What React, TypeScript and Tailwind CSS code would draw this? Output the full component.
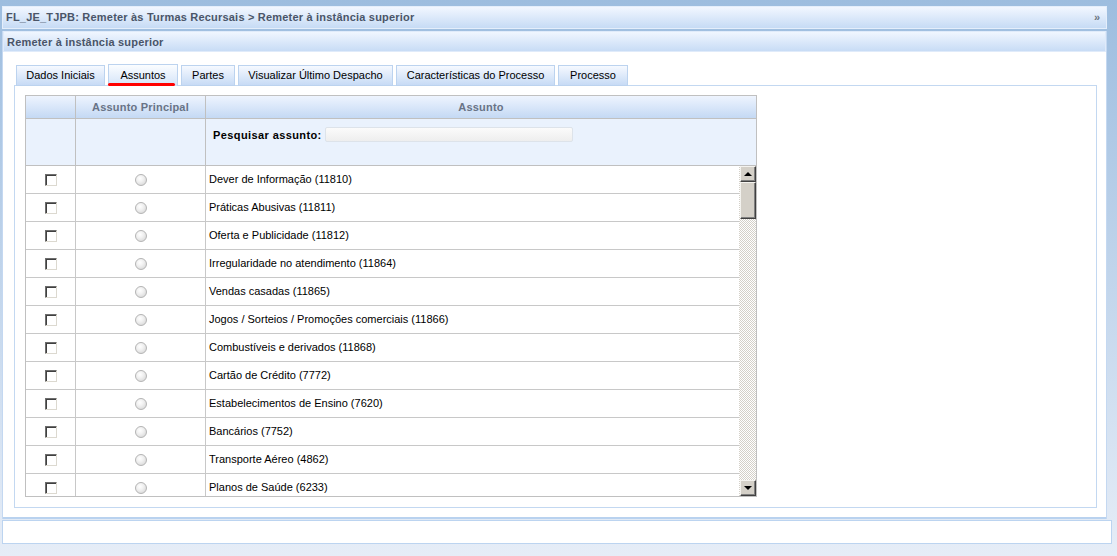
import React from "react";

const rows = [
  "Dever de Informação (11810)",
  "Práticas Abusivas (11811)",
  "Oferta e Publicidade (11812)",
  "Irregularidade no atendimento (11864)",
  "Vendas casadas (11865)",
  "Jogos / Sorteios / Promoções comerciais (11866)",
  "Combustíveis e derivados (11868)",
  "Cartão de Crédito (7772)",
  "Estabelecimentos de Ensino (7620)",
  "Bancários (7752)",
  "Transporte Aéreo (4862)",
  "Planos de Saúde (6233)",
];

const tabs = [
  { label: "Dados Iniciais", w: "w-[89px]" },
  { label: "Assuntos", w: "w-[70px]", active: true },
  { label: "Partes", w: "w-[54px]" },
  { label: "Visualizar Último Despacho", w: "w-[155px]" },
  { label: "Características do Processo", w: "w-[159px]" },
  { label: "Processo", w: "w-[70px]" },
];

function ScrollBtn({ up }: { up?: boolean }) {
  return (
    <div className="h-[16px] w-[16px] bg-[#d4d0c8] border border-t-[#f4f3ef] border-l-[#f4f3ef] border-r-[#404040] border-b-[#404040] flex items-center justify-center shadow-[inset_-1px_-1px_0_#808080]">
      <svg width="8" height="5" viewBox="0 0 8 5">
        {up ? <polygon points="0,4 4,0 8,4" fill="#000" /> : <polygon points="0,0 8,0 4,4" fill="#000" />}
      </svg>
    </div>
  );
}

export default function App() {
  return (
    <div
      className="w-[1117px] h-[556px] overflow-hidden bg-gradient-to-b from-[#9dbddf] to-[#e6edf7] pt-[6px] pl-[2px] text-black"
      style={{ fontFamily: '"Liberation Sans", Arial, sans-serif' }}
    >
      {/* top title bar */}
      <div className="w-[1105px] h-[23px] border border-[#e4eefb] bg-gradient-to-b from-[#f2f7ff] to-[#c6dbf5] flex items-center justify-between pl-[3px] pr-[6px]">
        <span className="text-[11px] font-bold text-[#4a5568] tracking-[0.2px]">
          FL_JE_TJPB: Remeter às Turmas Recursais &gt; Remeter à instância superior
        </span>
        <span className="text-[11px] font-bold text-[#6b7480]">»</span>
      </div>
      {/* second bar */}
      <div className="mt-[2px] w-[1105px] bg-white border-x border-[#c4d8f1]">
        <div className="h-[21px] border border-[#e0ebfa] bg-gradient-to-b from-[#f0f6ff] to-[#c8dcf5] flex items-center pl-[3px]">
          <span className="text-[11px] font-bold text-[#4a5568] tracking-[0.2px] mt-px">Remeter à instância superior</span>
        </div>
        {/* white panel */}
        <div className="h-[467px] border-b-2 border-[#b9d2ef] pt-[12px] pl-[11px]">
          {/* tabs */}
          <div className="relative flex items-end gap-[3px] ml-[2px] h-[22px]">
            {tabs.map((t) => (
              <div
                key={t.label}
                className={
                  t.active
                    ? `${t.w} h-[22px] border border-b-0 border-[#bcd3ef] bg-gradient-to-b from-[#fbfdff] to-[#d3e3f8] flex items-center justify-center text-[11px] relative z-10`
                    : `${t.w} h-[21px] border border-[#bcd3ef] bg-gradient-to-b from-[#f6f9ff] to-[#c7dbf5] flex items-center justify-center text-[11px]`
                }
              >
                {t.label}
              </div>
            ))}
            <div className="absolute left-[92px] top-[19px] w-[67px] h-[3px] rounded-full bg-[#ff0000] z-20" />
          </div>
          {/* tab content */}
          <div className="w-[1083px] h-[423px] border border-[#c3d8f1] -mt-px pt-[9px] pl-[10px]">
            <div className="w-[732px] border border-[#c0c0c0]">
              {/* header */}
              <div className="flex h-[23px] bg-gradient-to-b from-[#eef4fe] to-[#c4d9f4] border-b border-[#c0c0c0] text-[11px] font-bold text-[#687386] tracking-[0.2px]">
                <div className="w-[50px] border-r border-[#c0c0c0]" />
                <div className="w-[130px] border-r border-[#c0c0c0] flex items-center justify-center">Assunto Principal</div>
                <div className="flex-1 flex items-center justify-center">Assunto</div>
              </div>
              {/* filter */}
              <div className="flex h-[47px] bg-[#eaf2fd] border-b border-[#c0c0c0]">
                <div className="w-[50px] border-r border-[#c0c0c0]" />
                <div className="w-[130px] border-r border-[#c0c0c0]" />
                <div className="flex-1 flex items-start pt-[8px] pl-[7px] gap-[3px]">
                  <span className="text-[11px] font-bold leading-[15px] mt-[1px] tracking-[0.4px]">Pesquisar assunto:</span>
                  <div className="w-[248px] h-[15px] rounded-[2px] border border-[#dde3ea] bg-gradient-to-b from-[#fbfbfb] to-[#eeeeee]" />
                </div>
              </div>
              {/* body */}
              <div className="flex h-[330px] overflow-hidden">
                <div className="w-[713px]">
                  {rows.map((r) => (
                    <div key={r} className="flex h-[28px] border-b border-[#c8c8c8] shrink-0">
                      <div className="w-[50px] border-r border-[#c8c8c8] flex items-center justify-center">
                        <div className="w-[12px] h-[12px] bg-white border border-t-[#6e6e6e] border-l-[#6e6e6e] border-r-[#dcd9d0] border-b-[#dcd9d0] shadow-[inset_1px_1px_0_#404040]" />
                      </div>
                      <div className="w-[130px] border-r border-[#c8c8c8] flex items-center justify-center">
                        <div className="w-[12px] h-[12px] rounded-full border border-[#b4b4b4] bg-[radial-gradient(circle_at_40%_35%,#ffffff_0%,#f0f0f0_40%,#d0d0d0_100%)]" />
                      </div>
                      <div className="flex-1 flex items-center pl-[3px] text-[11px]">{r}</div>
                    </div>
                  ))}
                </div>
                {/* scrollbar */}
                <div className="w-[17px] h-[330px] flex flex-col bg-[repeating-conic-gradient(#d4d0c8_0%_25%,#ffffff_0%_50%)] bg-[length:2px_2px] pl-px">
                  <ScrollBtn up />
                  <div className="h-[37px] w-[16px] bg-[#d4d0c8] border border-t-[#f4f3ef] border-l-[#f4f3ef] border-r-[#404040] border-b-[#404040] shadow-[inset_-1px_-1px_0_#808080]" />
                  <div className="flex-1" />
                  <ScrollBtn />
                </div>
              </div>
            </div>
          </div>
        </div>
      </div>
      {/* footer */}
      <div className="mt-px w-[1110px] h-[24px] bg-white border border-[#bcd4f0]" />
    </div>
  );
}
